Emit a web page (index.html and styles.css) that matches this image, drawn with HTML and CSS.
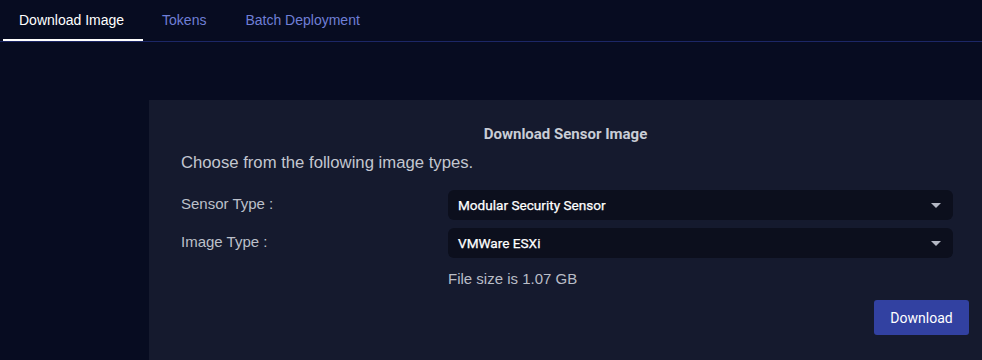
FILE: index.html
```html
<html><head>
<meta charset="UTF-8">
<meta name="viewport" content="width=device-width, initial-scale=1.0">
<title>Sensor Images</title>
<link rel="stylesheet" href="styles.css">
</head>
<body>
  <nav class="tabs">
    <a class="tab active" href="#">Download Image</a>
    <a class="tab" href="#">Tokens</a>
    <a class="tab" href="#">Batch Deployment</a>
  </nav>

  <main class="content">
    <section class="panel">
      <h2 class="panel-title">Download Sensor Image</h2>
      <div class="panel-body">
        <p class="intro">Choose from the following image types.</p>
        <div class="form">
          <label class="form-label">Sensor Type :</label>
          <div class="select">
            <span>Modular Security Sensor</span>
            <span class="caret"></span>
          </div>
          <label class="form-label">Image Type :</label>
          <div class="select">
            <span>VMWare ESXi</span>
            <span class="caret"></span>
          </div>
          <div></div>
          <div class="file-size">File size is 1.07 GB</div>
        </div>
        <div class="actions">
          <button class="btn-primary">Download</button>
        </div>
      </div>
    </section>
  </main>
</body></html>
```

FILE: styles.css
```css
body {
  margin: 0;
  padding: 0;
  background-color: #070c21;
  font-family: 'Liberation Sans', Arial, sans-serif;
  color: #c3c7d0;
  height: 100vh;
  display: flex;
  flex-direction: column;
  overflow: hidden;
}
.tabs {
  display: flex;
  height: 41px;
  padding-left: 3px;
  border-bottom: 1px solid #1c2766;
}
.tab {
  display: flex;
  align-items: center;
  padding: 1px 19px 1px 16px;
  font-size: 14px;
  color: #6f7fd6;
  text-decoration: none;
  border-bottom: 2px solid transparent;
}
.tab + .tab {
  padding-left: 19px;
  padding-right: 20px;
}
.tab.active {
  color: #ffffff;
  border-bottom-color: #ffffff;
}
.content {
  flex: 1;
  display: flex;
  padding: 58px 0 0 149px;
}
.panel {
  flex: 1;
  background-color: #151a2e;
  padding-top: 25px;
}
.panel-title {
  margin: 0;
  font-family: Roboto, sans-serif;
  font-size: 15px;
  font-weight: 700;
  text-align: center;
  color: #c9cdd6;
  line-height: 18px;
}
.panel-body {
  padding: 0 13px 0 32px;
}
.intro {
  margin: 10px 0 0;
  font-size: 16.7px;
  line-height: 20px;
  color: #c3c7d0;
}
.form {
  display: grid;
  grid-template-columns: 267px 1fr;
  row-gap: 8px;
  align-items: center;
  margin: 17px 16px 0 0;
}
.form-label {
  font-size: 15px;
  color: #bcc0ca;
  margin-top: -3px;
}
.select {
  display: flex;
  align-items: center;
  justify-content: space-between;
  height: 30px;
  padding: 0 12px 0 10px;
  background-color: #0c0f1d;
  border-radius: 6px;
  font-family: Roboto, sans-serif;
  font-size: 13.6px;
  font-weight: 400;
  color: #ffffff;
  -webkit-text-stroke: 0.25px #ffffff;
}
.caret {
  width: 0;
  height: 0;
  border-left: 5px solid transparent;
  border-right: 5px solid transparent;
  border-top: 5px solid #b4b8c4;
}
.file-size {
  margin-top: 4px;
  font-size: 15px;
  line-height: 18px;
  color: #b9bdc7;
}
.actions {
  display: flex;
  justify-content: flex-end;
  margin-top: 12px;
}
.btn-primary {
  width: 95px;
  height: 35px;
  background-color: #3241a1;
  color: #ffffff;
  border: none;
  border-radius: 3px;
  font-family: Roboto, sans-serif;
  font-size: 14px;
  cursor: pointer;
}
```
